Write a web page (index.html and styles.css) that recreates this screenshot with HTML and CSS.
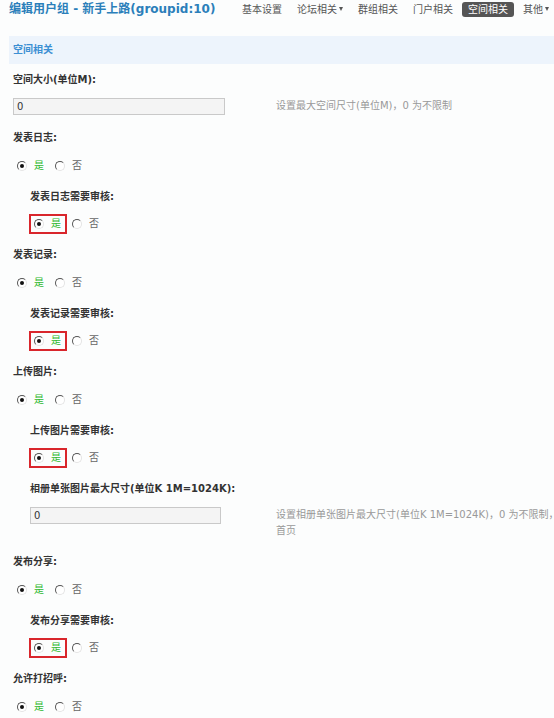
FILE: index.html
```html
<!DOCTYPE html>
<html lang="zh-CN">
<head>
<meta charset="utf-8">
<title>编辑用户组</title>
<link rel="stylesheet" href="styles.css">
</head>
<body>
<div class="page">
  <header class="header">
    <h1 class="title">编辑用户组 - 新手上路(groupid:10)</h1>
    <nav class="nav">
      <a class="nav-item">基本设置</a>
      <a class="nav-item">论坛相关<i class="caret"></i></a>
      <a class="nav-item">群组相关</a>
      <a class="nav-item">门户相关</a>
      <a class="nav-item active">空间相关</a>
      <a class="nav-item">其他<i class="caret"></i></a>
    </nav>
  </header>

  <div class="section-bar">空间相关</div>

  <div class="form">
    <div class="label first">空间大小(单位M):</div>
    <div class="field">
      <input class="text" type="text" value="0">
      <div class="tip">设置最大空间尺寸(单位M)，0 为不限制</div>
    </div>

    <div class="label">发表日志:</div>
    <div class="opts">
      <label class="opt"><span class="radio on"></span><span class="yes">是</span></label>
      <label class="opt"><span class="radio"></span><span class="no">否</span></label>
    </div>
    <div class="sub">
      <div class="label">发表日志需要审核:</div>
      <div class="opts">
        <label class="opt marked"><span class="radio on"></span><span class="yes">是</span></label>
        <label class="opt"><span class="radio"></span><span class="no">否</span></label>
      </div>
    </div>

    <div class="label">发表记录:</div>
    <div class="opts">
      <label class="opt"><span class="radio on"></span><span class="yes">是</span></label>
      <label class="opt"><span class="radio"></span><span class="no">否</span></label>
    </div>
    <div class="sub">
      <div class="label">发表记录需要审核:</div>
      <div class="opts">
        <label class="opt marked"><span class="radio on"></span><span class="yes">是</span></label>
        <label class="opt"><span class="radio"></span><span class="no">否</span></label>
      </div>
    </div>

    <div class="label">上传图片:</div>
    <div class="opts">
      <label class="opt"><span class="radio on"></span><span class="yes">是</span></label>
      <label class="opt"><span class="radio"></span><span class="no">否</span></label>
    </div>
    <div class="sub">
      <div class="label">上传图片需要审核:</div>
      <div class="opts">
        <label class="opt marked"><span class="radio on"></span><span class="yes">是</span></label>
        <label class="opt"><span class="radio"></span><span class="no">否</span></label>
      </div>
      <div class="label">相册单张图片最大尺寸(单位K 1M=1024K):</div>
      <div class="field">
        <input class="text" type="text" value="0">
        <div class="tip">设置相册单张图片最大尺寸(单位K 1M=1024K)，0 为不限制，含空间<br>首页</div>
      </div>
    </div>

    <div class="label">发布分享:</div>
    <div class="opts">
      <label class="opt"><span class="radio on"></span><span class="yes">是</span></label>
      <label class="opt"><span class="radio"></span><span class="no">否</span></label>
    </div>
    <div class="sub">
      <div class="label">发布分享需要审核:</div>
      <div class="opts">
        <label class="opt marked"><span class="radio on"></span><span class="yes">是</span></label>
        <label class="opt"><span class="radio"></span><span class="no">否</span></label>
      </div>
    </div>

    <div class="label">允许打招呼:</div>
    <div class="opts">
      <label class="opt"><span class="radio on"></span><span class="yes">是</span></label>
      <label class="opt"><span class="radio"></span><span class="no">否</span></label>
    </div>
  </div>
</div>
</body>
</html>
```

FILE: styles.css
```css
html {
  overflow: hidden;
  background: #fcfdfd;
}

body {
  margin: 0;
  font-family: "DejaVu Sans", "Noto Sans CJK SC", sans-serif;
  font-size: 10px;
  line-height: 16px;
  color: #333;
}

.page {
  width: 640px;
}

/* header */
.header {
  display: flex;
  align-items: center;
  height: 18px;
  padding-left: 9px;
}

.title {
  flex: 0 0 227px;
  margin: 0;
  font-size: 12px;
  line-height: 18px;
  font-weight: bold;
  color: #2b7fba;
  white-space: nowrap;
}

.nav {
  display: flex;
  align-items: center;
  gap: 3px;
}

.nav-item {
  display: flex;
  align-items: center;
  padding: 0 6px;
  line-height: 15px;
  color: #555;
  border-radius: 3px;
  white-space: nowrap;
}

.nav-item.active {
  background: #555;
  color: #fff;
}

.caret {
  width: 0;
  height: 0;
  margin-left: 2px;
  border-left: 2.5px solid transparent;
  border-right: 2.5px solid transparent;
  border-top: 4px solid #555;
}

/* section bar */
.section-bar {
  margin: 18px 0 0 9px;
  height: 28px;
  line-height: 28px;
  padding-left: 4px;
  background: #edf4fc;
  color: #3b8fd3;
  font-weight: bold;
}

/* form */
.form {
  padding-left: 13px;
}

.sub {
  padding-left: 17px;
}

.label {
  padding-top: 10px;
  line-height: 16px;
  font-weight: bold;
  color: #333;
  white-space: nowrap;
}

.label.first {
  padding-top: 8px;
}

.opts {
  display: flex;
  align-items: center;
  gap: 11px;
  height: 20px;
  padding: 9.5px 0 3px 4px;
}

.opt {
  position: relative;
  display: inline-flex;
  align-items: center;
  gap: 7px;
  height: 20px;
}

.marked::after {
  content: "";
  position: absolute;
  left: -5px;
  right: -6px;
  top: 0;
  bottom: 0;
  border: 2px solid #d9262c;
}

.radio {
  position: relative;
  box-sizing: border-box;
  width: 10px;
  height: 10px;
  border-radius: 50%;
  border: 1px solid;
  border-color: #555 #e4e4e4 #e4e4e4 #555;
  background: #fff;
}

.radio.on::after {
  content: "";
  position: absolute;
  left: 2px;
  top: 2px;
  width: 4px;
  height: 4px;
  border-radius: 50%;
  background: #111;
}

.yes {
  color: #2eb82e;
}

.no {
  color: #666;
}

.field {
  display: grid;
  grid-template-columns: 263px auto;
  align-items: start;
  padding: 10px 0 5px;
}

.sub .field {
  grid-template-columns: 246px auto;
}

.text {
  box-sizing: border-box;
  width: 212px;
  height: 17px;
  margin: 0;
  padding: 0 3px;
  border: 1px solid #c9c9c9;
  background: #f4f4f4;
  font-family: "DejaVu Sans", sans-serif;
  font-size: 10px;
  color: #333;
}

.sub .text {
  width: 191px;
}

.tip {
  color: #999;
  line-height: 16px;
  white-space: nowrap;
}
```
